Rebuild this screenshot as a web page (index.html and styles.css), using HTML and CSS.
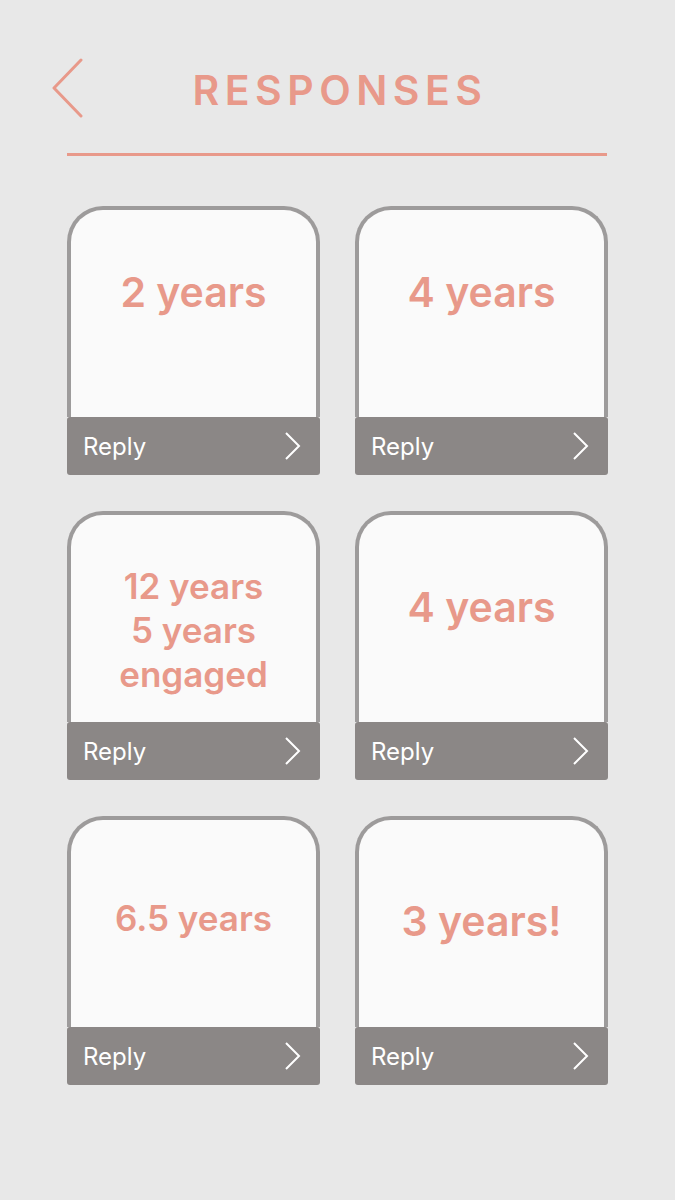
FILE: index.html
```html
<html>
<head>
<title>Responses</title>
<link rel="stylesheet" href="styles.css">
</head>
<body>
<div class="page">
	<header class="top">
		<svg class="back" width="32" height="60" viewBox="0 0 32 60"><path d="M29 2 L2 30 L29 58" fill="none" stroke="#e8998a" stroke-width="3" stroke-linecap="round" stroke-linejoin="round"/></svg>
		<h1>RESPONSES</h1>
		<span></span>
	</header>
	<div class="rule"></div>

	<div class="grid">
		<div class="card">
			<div class="body high"><p>2 years</p></div>
			<div class="reply">Reply <svg width="18" height="30" viewBox="0 0 18 30"><path d="M2 2 L15 15 L2 28" fill="none" stroke="#fff" stroke-width="2"/></svg></div>
		</div>
		<div class="card">
			<div class="body high"><p>4 years</p></div>
			<div class="reply">Reply <svg width="18" height="30" viewBox="0 0 18 30"><path d="M2 2 L15 15 L2 28" fill="none" stroke="#fff" stroke-width="2"/></svg></div>
		</div>
		<div class="card">
			<div class="body low"><p class="small">12 years<br>5 years<br>engaged</p></div>
			<div class="reply">Reply <svg width="18" height="30" viewBox="0 0 18 30"><path d="M2 2 L15 15 L2 28" fill="none" stroke="#fff" stroke-width="2"/></svg></div>
		</div>
		<div class="card">
			<div class="body mid"><p>4 years</p></div>
			<div class="reply">Reply <svg width="18" height="30" viewBox="0 0 18 30"><path d="M2 2 L15 15 L2 28" fill="none" stroke="#fff" stroke-width="2"/></svg></div>
		</div>
		<div class="card">
			<div class="body lift"><p class="small">6.5 years</p></div>
			<div class="reply">Reply <svg width="18" height="30" viewBox="0 0 18 30"><path d="M2 2 L15 15 L2 28" fill="none" stroke="#fff" stroke-width="2"/></svg></div>
		</div>
		<div class="card">
			<div class="body"><p>3 years!</p></div>
			<div class="reply">Reply <svg width="18" height="30" viewBox="0 0 18 30"><path d="M2 2 L15 15 L2 28" fill="none" stroke="#fff" stroke-width="2"/></svg></div>
		</div>
	</div>
</div>
</body>
</html>
```

FILE: styles.css
```css
html {
	background: #e8e8e8;
}
body {
	margin: 0;
	font-family: "Inter", "Liberation Sans", sans-serif;
}
.page {
	width: 675px;
	height: 1200px;
}
.top {
	display: grid;
	grid-template-columns: 1fr auto 1fr;
	align-items: center;
	padding: 58px 52px 0 52px;
	height: 60px;
}
.top h1 {
	margin: 0;
	padding: 4px 0 0 5px;
	font-size: 41px;
	font-weight: 600;
	letter-spacing: 5.5px;
	color: #e8998a;
	line-height: 56px;
}
.rule {
	margin: 35px 0 0 67px;
	width: 540px;
	height: 3px;
	background: #e8998a;
}
.grid {
	display: grid;
	grid-template-columns: 253px 253px;
	column-gap: 35px;
	row-gap: 36px;
	margin: 50px 0 0 67px;
}
.card {
	display: flex;
	flex-direction: column;
	height: 269px;
}
.body {
	flex: 1;
	display: flex;
	align-items: center;
	justify-content: center;
	padding-bottom: 6px;
	background: #fafafa;
	border: 4px solid #9d9b9b;
	border-bottom: none;
	border-radius: 36px 36px 0 0;
}
.body.high {
	padding-bottom: 44px;
}
.body.mid {
	padding-bottom: 24px;
}
.body.low {
	padding: 22px 0 0 0;
}
.body.lift {
	padding-bottom: 12px;
}
.body p {
	margin: 0;
	text-align: center;
	font-size: 41px;
	font-weight: 600;
	color: #e8998a;
}
.body p.small {
	font-size: 35px;
	line-height: 44px;
}
.reply {
	display: flex;
	align-items: center;
	justify-content: space-between;
	height: 58px;
	padding: 0 18px 0 16px;
	background: #8b8786;
	border-radius: 3px;
	color: #fff;
	font-size: 24px;
}
```
